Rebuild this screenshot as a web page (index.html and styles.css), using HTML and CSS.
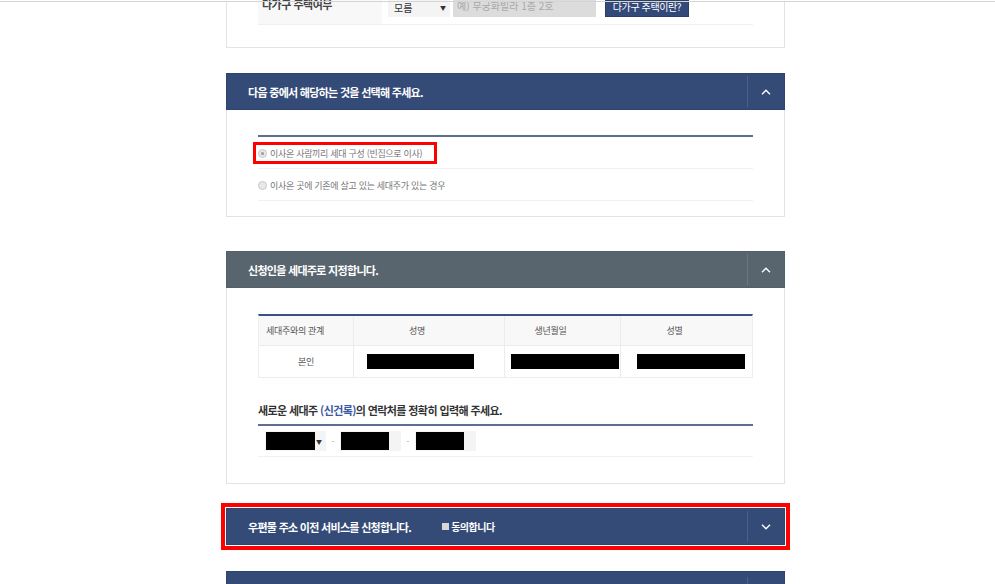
FILE: index.html
```html
<!DOCTYPE html>
<html lang="ko">
<head>
<meta charset="utf-8">
<link rel="stylesheet" href="styles.css">
</head>
<body>
<div class="frame-top"></div>
<main class="wrap">
  <section class="card card-cut">
    <div class="field-row">
      <div class="field-label">다가구 주택여부</div>
      <div class="field-ctrl">
        <div class="select sel-mo">모름<span class="arr">▼</span></div>
        <div class="input-dis">예) 무궁화빌라 1층 2호</div>
        <button class="btn-navy">다가구 주택이란?</button>
      </div>
    </div>
  </section>

  <section class="card card-s2">
    <header class="head navy">
      <h2>다음 중에서 해당하는 것을 선택해 주세요.</h2>
      <span class="toggle"><svg width="10" height="6" viewBox="0 0 10 6"><polyline points="1,5.2 5,1.2 9,5.2" fill="none" stroke="#fff" stroke-width="1.4"/></svg></span>
    </header>
    <div class="body">
      <div class="list">
        <div class="opt highlight"><span class="radio on"></span>이사온 사람끼리 세대 구성 (빈집으로 이사)</div>
        <div class="opt"><span class="radio"></span>이사온 곳에 기존에 살고 있는 세대주가 있는 경우</div>
      </div>
    </div>
  </section>

  <section class="card card-s3">
    <header class="head slate">
      <h2>신청인을 세대주로 지정합니다.</h2>
      <span class="toggle"><svg width="10" height="6" viewBox="0 0 10 6"><polyline points="1,5.2 5,1.2 9,5.2" fill="none" stroke="#fff" stroke-width="1.4"/></svg></span>
    </header>
    <div class="body body2">
      <div class="tbl">
        <div class="tr th">
          <div class="c c1">세대주와의 관계</div>
          <div class="c c2">성명</div>
          <div class="c c3">생년월일</div>
          <div class="c c4">성별</div>
        </div>
        <div class="tr td">
          <div class="c c1">본인</div>
          <div class="c c2 cm"><span class="mask m1"></span></div>
          <div class="c c3 cm"><span class="mask m2"></span></div>
          <div class="c c4 cm"><span class="mask m3"></span></div>
        </div>
      </div>
      <h3 class="sub">새로운 세대주 <span class="blue">(신건록)</span>의 연락처를 정확히 입력해 주세요.</h3>
      <div class="phone">
        <div class="pbox psel"><span class="mask pm1"></span><span class="arr">▼</span></div>
        <span class="dash">-</span>
        <div class="pbox"><span class="mask pm2"></span></div>
        <span class="dash">-</span>
        <div class="pbox"><span class="mask pm2"></span></div>
      </div>
    </div>
  </section>

  <section class="card card-closed">
    <div class="redbox">
      <header class="head navy">
        <h2>우편물 주소 이전 서비스를 신청합니다.</h2>
        <span class="agree"><span class="chk"></span>동의합니다</span>
        <span class="toggle"><svg width="10" height="6" viewBox="0 0 10 6"><polyline points="1,0.8 5,4.8 9,0.8" fill="none" stroke="#fff" stroke-width="1.4"/></svg></span>
      </header>
    </div>
  </section>

  <section class="card card-closed last">
    <header class="head navy"><h2></h2><span class="toggle"></span></header>
  </section>
</main>
<div class="frame-bottom"></div>
</body>
</html>
```

FILE: styles.css
```css
html, body {
  margin: 0;
  padding: 0;
  background: #fff;
  height: 584px;
  overflow: hidden;
}
body {
  font-family: "Noto Sans CJK KR", "Noto Sans", sans-serif;
  color: #555;
}
.frame-top {
  height: 1px;
  border-top: 1px solid #d4d4d4;
  margin-top: 1px;
  margin-bottom: -2px;
  position: relative;
  z-index: 2;
}
.frame-bottom {
  position: fixed;
  left: 0;
  right: 0;
  bottom: 0;
  height: 2px;
  background: #c9c9c9;
  z-index: -1;
}
.wrap {
  width: 559px;
  margin-left: 226px;
  display: flex;
  flex-direction: column;
}
.card {
  border: 1px solid #e3e3e3;
  box-sizing: border-box;
  margin-bottom: 26px;
  background: #fff;
}
.card-cut {
  border-top: none;
  height: 47px;
  padding: 0 31px;
  margin-bottom: 25px;
}
.card-s2 { margin-bottom: 34px; }
.card-s3 { margin-bottom: 19px; }
.field-row {
  display: flex;
  height: 23px;
  border-bottom: 1px solid #efefef;
}
.field-label {
  width: 124px;
  background: #f8f8f8;
  font-size: 11px;
  font-weight: bold;
  color: #444;
  letter-spacing: -0.5px;
  padding-left: 4px;
  box-sizing: border-box;
  line-height: 14px;
  margin-top: -4px;
}
.field-ctrl {
  display: flex;
  align-items: flex-start;
  padding-left: 6px;
  gap: 3px;
}
.select {
  width: 62px;
  height: 17px;
  background: #f4f4f4;
  font-size: 10px;
  color: #333;
  box-sizing: border-box;
  padding: 0 0 2px 6px;
  display: flex;
  align-items: center;
  justify-content: space-between;
  line-height: 1;
  margin-top: -1px;
}
.arr {
  font-size: 6px;
  color: #333;
  padding-right: 4px;
}
.input-dis {
  width: 143px;
  height: 17px;
  background: #dcdcdc;
  color: #a8a8a8;
  font-size: 10px;
  padding-left: 4px;
  box-sizing: border-box;
  line-height: 11px;
  margin-top: -1px;
}
.btn-navy {
  margin-left: 6px;
  width: 84px;
  height: 17px;
  background: #334a78;
  border: 1px solid #2a3e66;
  color: #fff;
  font-family: inherit;
  font-size: 10px;
  letter-spacing: -0.4px;
  padding: 0 0 4px;
  line-height: 11px;
  margin-top: -1px;
  box-sizing: border-box;
}
.head {
  height: 35px;
  display: flex;
  align-items: center;
  color: #fff;
  margin: -1px -1px 0;
  border: 1px solid transparent;
}
.navy { background: #344b78; border-color: #2f456f; }
.slate { background: #58656f; border-color: #53606a; }
.head h2 {
  margin: 0;
  padding-left: 21px;
  font-size: 11px;
  font-weight: bold;
  letter-spacing: -0.7px;
  flex: none;
}
.toggle {
  margin-left: auto;
  width: 36px;
  height: 31px;
  border-left: 1px solid rgba(255,255,255,0.12);
  display: flex;
  align-items: center;
  justify-content: center;
}
.body {
  padding: 25px 31px 15px;
}
.list {
  border-top: 2px solid #5d6f90;
}
.opt {
  height: 32px;
  border-bottom: 1px solid #f0f0f0;
  display: flex;
  align-items: center;
  font-size: 9px;
  color: #777;
  letter-spacing: -0.3px;
  position: relative;
  padding-top: 2px;
  box-sizing: border-box;
}
.opt.highlight::after {
  content: "";
  position: absolute;
  left: -5px;
  top: 5px;
  width: 178px;
  height: 16px;
  border: 3px solid #f00;
}
.radio {
  width: 7px;
  height: 7px;
  border-radius: 50%;
  border: 1px solid #c8c8c8;
  background: #e8e8e8;
  margin-right: 3px;
  box-sizing: content-box;
  position: relative;
}
.radio.on::after {
  content: "";
  position: absolute;
  left: 2px;
  top: 2px;
  width: 3px;
  height: 3px;
  border-radius: 50%;
  background: #999;
}
.body2 {
  padding: 26px 31px 26px;
}
.tbl {
  border-top: 2px solid #3b5082;
  border-left: 1px solid #eee;
  border-right: 1px solid #eee;
}
.tr {
  display: flex;
  border-bottom: 1px solid #ececec;
}
.th { height: 29px; background: #f8f8f8; }
.td { height: 31px; background: #fff; }
.c {
  display: flex;
  align-items: center;
  justify-content: center;
  font-size: 9px;
  color: #555;
  border-left: 1px solid #ececec;
  letter-spacing: -0.3px;
  box-sizing: border-box;
}
.c1 { width: 94px; border-left: none; }
.th .c1 { justify-content: flex-start; padding-left: 7px; }
.c2 { width: 151px; padding-right: 24px; }
.c3 { width: 116px; padding-right: 24px; }
.c4 { flex: 1; padding-right: 24px; }
.td .cm { justify-content: flex-start; padding-right: 0; }
.mask { display: block; background: #000; height: 15px; }
.m1 { width: 107px; margin-left: 13px; }
.m2 { width: 108px; margin-left: 6px; }
.m3 { width: 108px; margin-left: 16px; }
.sub {
  margin: 24px 0 0;
  font-size: 11px;
  font-weight: bold;
  color: #333;
  letter-spacing: -0.6px;
  height: 16px;
  line-height: 16px;
  padding-bottom: 6px;
  border-bottom: 2px solid #5d6f90;
}
.blue { color: #3b5aa3; }
.phone {
  display: flex;
  align-items: center;
  height: 30px;
  border-bottom: 1px solid #f2f2f2;
  padding-left: 7px;
}
.pbox {
  width: 61px;
  height: 20px;
  background: #f4f4f4;
  display: flex;
  align-items: center;
  justify-content: space-between;
  box-sizing: border-box;
  padding-left: 1px;
}
.pm1 { width: 49px; height: 18px; }
.pm2 { width: 48px; height: 18px; }
.dash {
  width: 14px;
  text-align: center;
  font-size: 8px;
  color: #999;
}
.card-closed {
  border: none;
  margin-bottom: 21px;
  background: transparent;
}
.redbox {
  margin: 0 -5px;
  border: 4px solid #f00;
  padding: 1px;
}
.redbox .head { margin: 0; }
.agree {
  margin-left: 31px;
  font-size: 10px;
  font-weight: bold;
  display: flex;
  align-items: center;
  letter-spacing: -0.5px;
}
.chk {
  width: 7px;
  height: 7px;
  background: #d6d6d6;
  margin-right: 2px;
}
.last .head { margin: 0; height: 40px; }
```
